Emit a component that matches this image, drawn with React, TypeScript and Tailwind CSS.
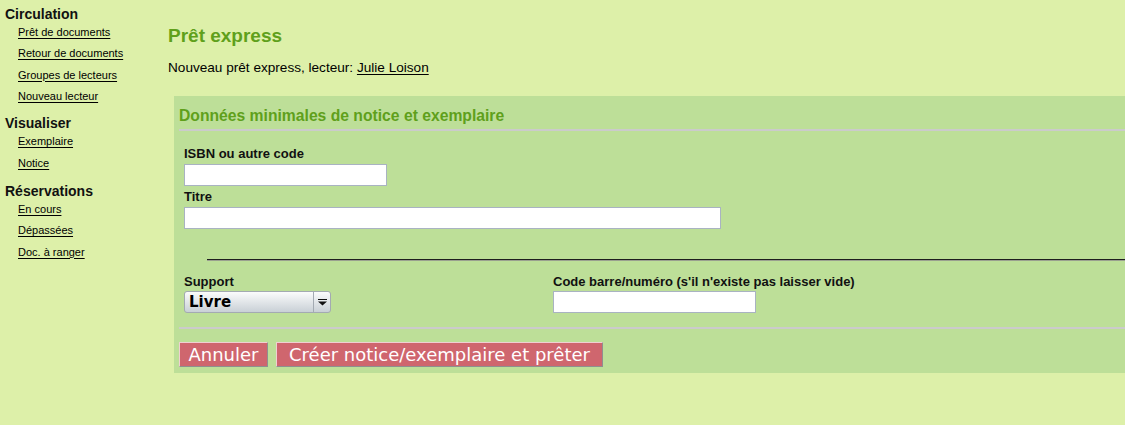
import React from "react";

const sans = { fontFamily: '"Liberation Sans", Arial, sans-serif' };

function NavHead({ children, className = "" }: { children: React.ReactNode; className?: string }) {
  return <div className={`text-[14px] font-bold leading-[16px] text-[#111] ${className}`}>{children}</div>;
}
function NavLink({ children }: { children: React.ReactNode }) {
  return (
    <div className="pl-[13px] text-[11px] leading-[21.33px]">
      <a href="#" className="text-black underline underline-offset-2">{children}</a>
    </div>
  );
}

export default function App() {
  return (
    <div className="flex min-h-[425px] w-full overflow-hidden bg-[#ddf0a9] text-black" style={sans}>
      <div className="w-[168px] shrink-0 pl-[5px] pt-[6px]">
        <NavHead>Circulation</NavHead>
        <NavLink>Prêt de documents</NavLink>
        <NavLink>Retour de documents</NavLink>
        <NavLink>Groupes de lecteurs</NavLink>
        <NavLink>Nouveau lecteur</NavLink>
        <NavHead className="mt-[8px]">Visualiser</NavHead>
        <NavLink>Exemplaire</NavLink>
        <NavLink>Notice</NavLink>
        <NavHead className="mt-[9px]">Réservations</NavHead>
        <NavLink>En cours</NavLink>
        <NavLink>Dépassées</NavLink>
        <NavLink>Doc. à ranger</NavLink>
      </div>
      <div className="flex-1 pt-[25px]">
        <h1 className="text-[19px] font-bold leading-[21px] text-[#5fa01b]">Prêt express</h1>
        <p className="mt-[14px] text-[13.6px] leading-[16px]">
          Nouveau prêt express, lecteur:{" "}
          <a href="#" className="text-black underline underline-offset-2">Julie Loison</a>
        </p>
        <div className="ml-[6px] mt-[20px] bg-[#bddf98] pb-[6px] pl-[5px]">
          <h2 className="pt-[10px] text-[15.7px] font-bold leading-[19px] text-[#5fa01b]">
            Données minimales de notice et exemplaire
          </h2>
          <div className="mt-[4px] h-[2px] bg-[#cbcbcb]" />
          <div className="pl-[5px]">
            <label className="mt-[15px] block text-[13px] font-bold leading-[15px] text-[#111]">ISBN ou autre code</label>
            <input className="mt-[3px] block h-[22px] w-[203px] border border-[#a9b3c2] bg-white" />
            <label className="mt-[3px] block text-[13px] font-bold leading-[15px] text-[#111]">Titre</label>
            <input className="mt-[3px] block h-[22px] w-[537px] border border-[#a9b3c2] bg-white" />
            <div className="ml-[23px] mt-[30px] h-[2px] border-t border-b border-t-[#1e1e1e] border-b-[#9aa08f]" />
            <div className="mt-[13px] flex">
              <div className="w-[369px]">
                <label className="block text-[13px] font-bold leading-[15px] text-[#111]">Support</label>
                <div className="mt-[2px] flex h-[22px] w-[147px] items-stretch rounded-[3px] border border-[#a3aab2] bg-gradient-to-b from-[#fbfcfc] to-[#c9d0d6]">
                  <span
                    className="flex flex-1 items-center pl-[4px] text-[15px] font-bold"
                    style={{ fontFamily: '"DejaVu Sans", sans-serif' }}
                  >
                    Livre
                  </span>
                  <span className="flex w-[17px] items-center justify-center border-l border-[#a3aab2]">
                    <svg width="9" height="8" viewBox="0 0 9 8">
                      <rect x="0" y="1" width="9" height="1" fill="#111" />
                      <path d="M0 3.5 H9 L4.5 7.5 Z" fill="#111" />
                    </svg>
                  </span>
                </div>
              </div>
              <div>
                <label className="block text-[13px] font-bold leading-[15px] text-[#111]">
                  Code barre/numéro (s'il n'existe pas laisser vide)
                </label>
                <input className="mt-[2px] block h-[22px] w-[203px] border border-[#a9b3c2] bg-white" />
              </div>
            </div>
          </div>
          <div className="mt-[14px] h-[2px] bg-[#cbcbcb]" />
          <div className="mt-[13px] flex gap-[8px]" style={{ fontFamily: '"DejaVu Sans", sans-serif' }}>
            <button className="h-[25px] w-[89px] border border-t-[#f0d0d2] border-l-[#f0d0d2] border-b-[#8f8f8f] border-r-[#8f8f8f] bg-[#cf666e] text-[18px] leading-[22px] text-white">
              Annuler
            </button>
            <button className="h-[25px] w-[327px] border border-t-[#f0d0d2] border-l-[#f0d0d2] border-b-[#8f8f8f] border-r-[#8f8f8f] bg-[#cf666e] text-[18px] leading-[22px] text-white">
              Créer notice/exemplaire et prêter
            </button>
          </div>
        </div>
      </div>
    </div>
  );
}
